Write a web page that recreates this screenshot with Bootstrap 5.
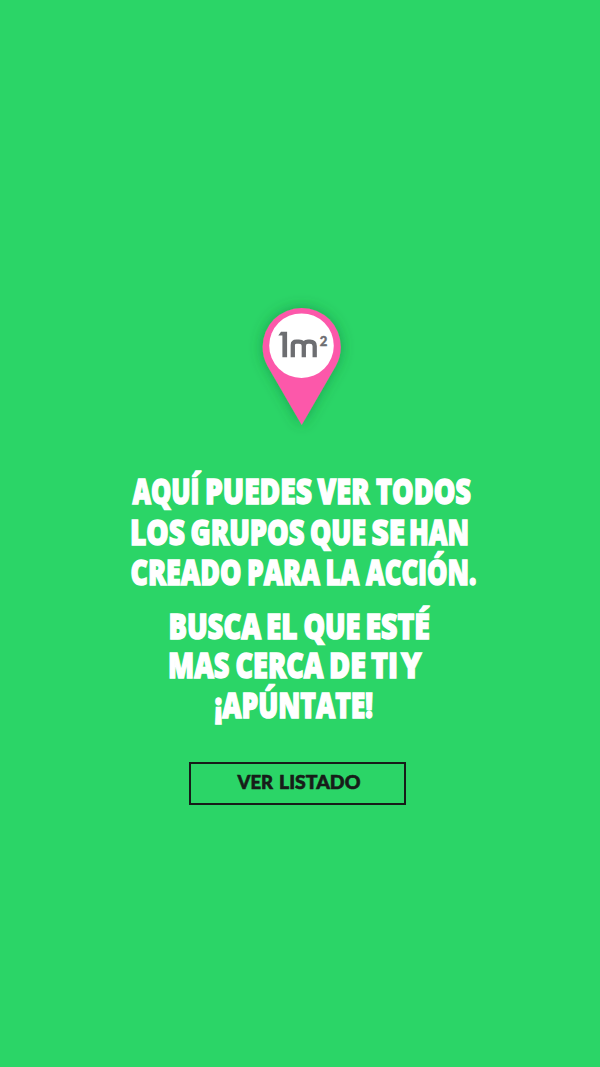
<!DOCTYPE html>
<html lang="es">
<head>
<meta charset="utf-8">
<meta name="viewport" content="width=device-width, initial-scale=1">
<title>1m² – Grupos</title>
<link href="https://cdn.jsdelivr.net/npm/bootstrap@5.3.0/dist/css/bootstrap.min.css" rel="stylesheet">
<style>
body { background: #2bd567; font-family: "Open Sans", "Noto Sans", sans-serif; }
.screen { width: 600px; height: 1067px; padding-top: 290px; overflow: hidden; }
.pin { width: 124px; height: 150px; margin-left: 4px; overflow: visible; }
.headline { width: 600px; margin-top: 25px; }
.headline svg { display: block; overflow: visible; }
.headline text { font-family: "Open Sans", sans-serif; font-weight: 800; font-size: 35.5px; fill: #fff; stroke: #fff; stroke-width: 1.5px; }
.btn-list { width: 217px; height: 43px; margin: 21.5px 0 0 -5px; border: 2px solid #171c19; color: #171c19; }
.btn-list:hover { background: #171c19; color: #2bd567; }
.btn-list text { font-family: Lato, sans-serif; font-weight: 900; font-size: 19px; fill: currentColor; stroke: currentColor; stroke-width: .6px; }
</style>
</head>
<body>
<main class="screen d-flex flex-column align-items-center">
  <svg class="pin flex-shrink-0" viewBox="240 290 124 150" role="img" aria-label="1m²">
    <defs><filter id="shade" x="-40%" y="-30%" width="180%" height="160%"><feDropShadow dx="0" dy="0" stdDeviation="7" flood-color="#105c2b" flood-opacity=".42"/></filter></defs>
    <path filter="url(#shade)" fill="#fc58aa" d="M301.7 425 L267.5 366 C264.3 360 262.6 354 262.6 347 A39.1 39.1 0 0 1 340.8 347 C340.8 354 339 360 335.8 366Z"/>
    <circle cx="301.5" cy="345.7" r="32.3" fill="#fff"/>
    <g font-family="Lato, sans-serif" fill="#6d6e71">
      <path d="M278.3 335.6 L281 331.7 H287.1 V357.3 H282.4 V335.6Z"/>
      <path d="M292.8 357.3 V345 Q292.8 341.6 296.5 341.6 H299 Q303.8 341.6 303.8 346 V357.3 M303.8 346 Q303.8 341.6 308 341.6 H310 Q314.7 341.6 314.7 346 V357.3" fill="none" stroke="#6d6e71" stroke-width="4.3"/>
      <text x="319.7" y="345.5" font-size="14" font-weight="900" stroke="#6d6e71" stroke-width=".4" textLength="7.6" lengthAdjust="spacingAndGlyphs">2</text>
    </g>
  </svg>

  <div class="headline flex-shrink-0">
    <svg width="600" height="41" viewBox="0 465 600 41">
      <text x="132.5" y="504" textLength="67" lengthAdjust="spacingAndGlyphs">AQUÍ</text>
      <text x="205" y="504" textLength="107" lengthAdjust="spacingAndGlyphs">PUEDES</text>
      <text x="317.5" y="504" textLength="52" lengthAdjust="spacingAndGlyphs">VER</text>
      <text x="376" y="504" textLength="95" lengthAdjust="spacingAndGlyphs">TODOS</text>
    </svg>
    <svg width="600" height="41" viewBox="0 506 600 41">
      <text x="130" y="545.3" textLength="55" lengthAdjust="spacingAndGlyphs">LOS</text>
      <text x="190.5" y="545.3" textLength="114" lengthAdjust="spacingAndGlyphs">GRUPOS</text>
      <text x="310" y="545.3" textLength="56" lengthAdjust="spacingAndGlyphs">QUE</text>
      <text x="371.5" y="545.3" textLength="33.5" lengthAdjust="spacingAndGlyphs">SE</text>
      <text x="409" y="545.3" textLength="60" lengthAdjust="spacingAndGlyphs">HAN</text>
    </svg>
    <svg width="600" height="53" viewBox="0 547 600 53">
      <text x="130.5" y="585.3" textLength="111" lengthAdjust="spacingAndGlyphs">CREADO</text>
      <text x="247" y="585.3" textLength="73" lengthAdjust="spacingAndGlyphs">PARA</text>
      <text x="325.5" y="585.3" textLength="34" lengthAdjust="spacingAndGlyphs">LA</text>
      <text x="366" y="585.3" textLength="110.5" lengthAdjust="spacingAndGlyphs">ACCIÓN.</text>
    </svg>
    <svg width="600" height="41" viewBox="0 600 600 41">
      <text x="168.5" y="639.3" textLength="92.5" lengthAdjust="spacingAndGlyphs">BUSCA</text>
      <text x="266" y="639.3" textLength="31.5" lengthAdjust="spacingAndGlyphs">EL</text>
      <text x="303.5" y="639.3" textLength="57" lengthAdjust="spacingAndGlyphs">QUE</text>
      <text x="365.5" y="639.3" textLength="64.5" lengthAdjust="spacingAndGlyphs">ESTÉ</text>
    </svg>
    <svg width="600" height="39" viewBox="0 641 600 39">
      <text x="168" y="678" textLength="61.5" lengthAdjust="spacingAndGlyphs">MAS</text>
      <text x="235.5" y="678" textLength="88" lengthAdjust="spacingAndGlyphs">CERCA</text>
      <text x="329" y="678" textLength="37" lengthAdjust="spacingAndGlyphs">DE</text>
      <text x="371" y="678" textLength="27" lengthAdjust="spacingAndGlyphs">TI</text>
      <text x="401" y="678" textLength="20.5" lengthAdjust="spacingAndGlyphs">Y</text>
    </svg>
    <svg width="600" height="60" viewBox="0 680 600 60">
      <text x="214.5" y="717.8" textLength="158.5" lengthAdjust="spacingAndGlyphs">¡APÚNTATE!</text>
    </svg>
  </div>

  <a href="#listado" class="btn btn-list rounded-0 p-0 flex-shrink-0">
    <svg class="d-block" width="213" height="39" viewBox="0 0 213 39">
      <text x="46.5" y="25.3" textLength="35.5" lengthAdjust="spacingAndGlyphs">VER</text>
      <text x="88" y="25.3" textLength="81.5" lengthAdjust="spacingAndGlyphs">LISTADO</text>
    </svg>
  </a>
</main>
<script src="https://cdn.jsdelivr.net/npm/bootstrap@5.3.0/dist/js/bootstrap.bundle.min.js"></script>
</body>
</html>
